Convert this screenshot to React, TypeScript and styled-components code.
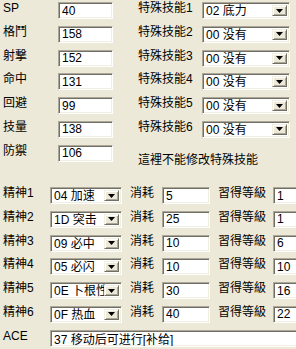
import React from "react";
import styled, { createGlobalStyle } from "styled-components";

const GlobalStyle = createGlobalStyle`
  html, body {
    margin: 0;
    padding: 0;
    background: #ece9d8;
    overflow: hidden;
  }
  body {
    font-family: "Liberation Sans Narrow", "Liberation Sans", "Noto Sans CJK SC", sans-serif;
    font-size: 12px;
    color: #000;
  }
`;

const Dialog = styled.div`
  width: 296px;
  height: 349px;
  overflow: hidden;
  box-sizing: border-box;
  padding: 2px 0 0 3px;
`;

const TopSection = styled.div`
  display: flex;
  height: 164px;
`;

const StatGrid = styled.div`
  display: grid;
  grid-template-columns: 55px 55px;
  grid-auto-rows: 17px;
  row-gap: 6.75px;
`;

const SkillColumn = styled.div`
  margin-left: 25px;
  display: flex;
  flex-direction: column;
`;

const SkillGrid = styled.div`
  display: grid;
  grid-template-columns: 64px 88px;
  grid-auto-rows: 17px;
  row-gap: 6.75px;
`;

const Note = styled.div`
  margin-top: 15px;
  line-height: 14px;
  white-space: nowrap;
`;

const SpiritGrid = styled.div`
  margin-top: 21px;
  display: grid;
  grid-template-columns: 47px 72px 40px 48px 63px 40px;
  grid-auto-rows: 17px;
  row-gap: 6.75px;
`;

const Label = styled.div<{ $indent?: number }>`
  line-height: 13px;
  padding-left: ${(p) => p.$indent ?? 0}px;
  white-space: nowrap;
`;

const sunken = `
  box-sizing: border-box;
  border: 1px solid;
  border-color: #aca899 #ffffff #ffffff #aca899;
  box-shadow: inset 1px 1px #716f64, inset -1px -1px #f1efe2;
  background: #fff;
`;

const Field = styled.input<{ $span?: boolean }>`
  ${sunken}
  width: 100%;
  height: 17px;
  margin: 0;
  padding: 0 0 0 3px;
  font: inherit;
  color: #000;
  outline: none;
  grid-column: ${(p) => (p.$span ? "2 / -1" : "auto")};
`;

const Combo = styled.div`
  ${sunken}
  height: 17px;
  display: flex;
  align-items: stretch;
  padding: 2px 2px 2px 3px;
`;

const ComboText = styled.span`
  flex: 1;
  min-width: 0;
  line-height: 13px;
  white-space: nowrap;
`;

const ComboButton = styled.span`
  box-sizing: border-box;
  flex: none;
  width: 15px;
  border: 1px solid;
  border-color: #f1efe2 #716f64 #716f64 #f1efe2;
  box-shadow: inset 1px 1px #ffffff, inset -1px -1px #aca899;
  background: #ece9d8;
  display: flex;
  align-items: center;
  justify-content: center;
`;

const Arrow = () => (
  <svg width="7" height="4" viewBox="0 0 7 4">
    <path d="M0 0H7L3.5 4Z" fill="#000" />
  </svg>
);

const Select = ({ value }: { value: string }) => (
  <Combo>
    <ComboText>{value}</ComboText>
    <ComboButton>
      <Arrow />
    </ComboButton>
  </Combo>
);

const stats = [
  ["SP", "40"],
  ["格鬥", "158"],
  ["射撃", "152"],
  ["命中", "131"],
  ["回避", "99"],
  ["技量", "138"],
  ["防禦", "106"],
];

const skills = ["02 底力", "00 没有", "00 没有", "00 没有", "00 没有", "00 没有"];

const spirits = [
  ["04 加速", "5", "1"],
  ["1D 突击", "25", "1"],
  ["09 必中", "10", "6"],
  ["05 必闪", "10", "10"],
  ["0E 卜根性", "30", "16"],
  ["0F 热血", "40", "22"],
];

export default function App() {
  return (
    <>
      <GlobalStyle />
      <Dialog>
        <TopSection>
          <StatGrid>
            {stats.map(([name, value]) => (
              <React.Fragment key={name}>
                <Label>{name}</Label>
                <Field readOnly defaultValue={value} />
              </React.Fragment>
            ))}
          </StatGrid>
          <SkillColumn>
            <SkillGrid>
              {skills.map((s, i) => (
                <React.Fragment key={i}>
                  <Label>特殊技能{i + 1}</Label>
                  <Select value={s} />
                </React.Fragment>
              ))}
            </SkillGrid>
            <Note>這裡不能修改特殊技能</Note>
          </SkillColumn>
        </TopSection>
        <SpiritGrid>
          {spirits.map(([sp, cost, level], i) => (
            <React.Fragment key={i}>
              <Label>精神{i + 1}</Label>
              <Select value={sp} />
              <Label $indent={8}>消耗</Label>
              <Field readOnly defaultValue={cost} />
              <Label $indent={8}>習得等級</Label>
              <Field readOnly defaultValue={level} />
            </React.Fragment>
          ))}
          <Label>ACE</Label>
          <Field $span readOnly defaultValue="37 移动后可进行[补给]" />
        </SpiritGrid>
      </Dialog>
    </>
  );
}
